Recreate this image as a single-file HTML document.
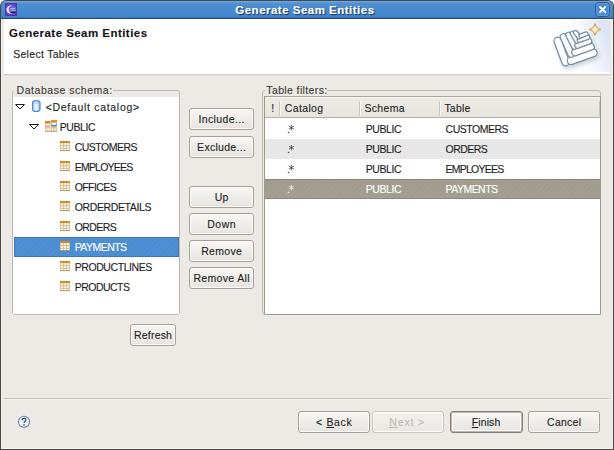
<!DOCTYPE html>
<html><head><meta charset="utf-8"><style>
*{margin:0;padding:0;box-sizing:border-box}
html,body{width:614px;height:450px;overflow:hidden;background:#fff}
body{position:relative;font-family:"Liberation Sans",sans-serif}
.a{position:absolute}
.tx{position:absolute;white-space:nowrap;line-height:20px;-webkit-text-stroke:0.12px currentColor}
.btn{position:absolute;border:1px solid #a8a095;border-radius:3px;background:linear-gradient(#f8f7f5,#efede9 50%,#e8e5df);box-shadow:inset 0 0 0 1px rgba(255,255,255,.8)}
.btn.dis{border-color:#cbc5bc;background:linear-gradient(#f3f1ee,#ebe8e3)}
.btn.def{border:1px solid #877f73;box-shadow:inset 0 0 0 1px #bdb5a9,inset 0 0 0 2px #fbfaf8}
.grp{position:absolute;border:1px solid #c0b9ae;border-radius:3px}
u{text-decoration:underline;text-underline-offset:1px}
</style></head><body>
<div class="a" style="left:0;top:0;width:614px;height:450px;background:#4a4643;border-radius:6px 6px 0 0"></div>
<div class="a" style="left:1px;top:19px;width:612px;height:430px;background:#f7f5f2"></div>
<div class="a" style="left:2px;top:19px;width:610px;height:429px;background:#edeae5"></div>
<div class="a" style="left:1px;top:1px;width:612px;height:18px;border-radius:5px 5px 0 0;background:linear-gradient(#7db4ea 0,#5c9ada 1px,#4e8fd3 3px,#4789ce 60%,#4183ca 100%)"></div>
<div class="a" style="left:1px;top:17px;width:612px;height:1px;background:#3f78bd"></div>
<div class="a" style="left:1px;top:18px;width:612px;height:1px;background:#244a7a"></div>
<div class="tx" style="left:235.30px;top:0.20px;font-size:11.5px;letter-spacing:0.490px;color:#fff;font-weight:bold;text-shadow:1px 1px 1px rgba(20,40,80,.9);">Generate Seam Entities</div>
<svg class="a" style="left:5px;top:3px" width="13" height="13" viewBox="0 0 13 13">
<rect x="0" y="0" width="12" height="13" fill="#5a44c4"/>
<rect x="0.5" y="0.5" width="11" height="12" fill="none" stroke="#4d3aa8" stroke-width="1"/>
<circle cx="5.6" cy="6.6" r="4.2" fill="#efe2ef"/>
<circle cx="7.4" cy="6.4" r="3.7" fill="#7466cf"/>
<rect x="5.5" y="5" width="4.5" height="1" fill="#a8d2ee" opacity=".8"/>
<rect x="5.2" y="6.8" width="5" height="1" fill="#a8d2ee" opacity=".8"/>
<rect x="5.5" y="8.6" width="5" height="1.5" fill="#202458"/>
</svg>
<svg class="a" style="left:595px;top:2px" width="15" height="15" viewBox="0 0 15 15">
<rect x="0.5" y="0.5" width="14" height="14" rx="3" fill="#4d8cd3" stroke="#34558e" stroke-width="1"/>
<rect x="1.5" y="1.5" width="12" height="12" rx="2" fill="none" stroke="#5c9ade" stroke-width="1"/>
<path d="M5 5 L10.2 10.2 M10.2 5 L5 10.2" stroke="#fff" stroke-width="1.9" stroke-linecap="round"/>
</svg>
<div class="a" style="left:4px;top:19px;width:606px;height:55px;background:#fff"></div>
<div class="a" style="left:4px;top:74px;width:606px;height:1px;background:#d3ccc2"></div>
<div class="a" style="left:4px;top:75px;width:606px;height:1px;background:#e5e1db"></div>
<div class="tx" style="left:9.00px;top:23.20px;font-size:11.5px;letter-spacing:0.455px;color:#141414;font-weight:bold;">Generate Seam Entities</div>
<div class="tx" style="left:13.20px;top:43.53px;font-size:10.5px;letter-spacing:0.295px;color:#1e1e1e;">Select Tables</div>
<svg class="a" style="left:540px;top:19px" width="70" height="54" viewBox="540 19 70 54">
<defs><filter id="sh" x="-30%" y="-30%" width="160%" height="160%"><feGaussianBlur stdDeviation="2.2"/></filter>
<linearGradient id="bg" gradientUnits="userSpaceOnUse" x1="566" y1="50" x2="606" y2="36"><stop offset="0" stop-color="#fff" stop-opacity="0"/><stop offset="1" stop-color="#dde4f5"/></linearGradient></defs>
<rect x="540" y="20" width="70" height="52" fill="url(#bg)"/>
<g stroke="#8ea3b6" stroke-linecap="round" opacity=".45" filter="url(#sh)"><line x1="559.3" y1="43.5" x2="567.0" y2="64.5" stroke-width="9.3"/><line x1="572.5" y1="63.3" x2="594.8" y2="55.3" stroke-width="9.3"/><line x1="565.0" y1="39.5" x2="572.5" y2="56.5" stroke-width="8.3"/><line x1="576.5" y1="55.0" x2="592.5" y2="49.3" stroke-width="8.3"/><line x1="570.0" y1="37.5" x2="576.0" y2="49.0" stroke-width="7.3"/><line x1="579.0" y1="48.0" x2="590.5" y2="43.8" stroke-width="7.3"/><line x1="574.0" y1="36.0" x2="578.5" y2="43.5" stroke-width="6.3"/><line x1="581.0" y1="42.5" x2="589.0" y2="39.8" stroke-width="6.3"/><line x1="577.0" y1="35.0" x2="580.5" y2="39.5" stroke-width="5.8"/><line x1="582.5" y1="38.3" x2="587.5" y2="36.5" stroke-width="5.8"/></g>
<g stroke-linecap="round"><line x1="557.8" y1="41" x2="565.5" y2="62" stroke="#7890a2" stroke-width="8.8"/><line x1="557.8" y1="41" x2="565.5" y2="62" stroke="#fdfdfe" stroke-width="6.3"/><line x1="571" y1="60.8" x2="593.3" y2="52.8" stroke="#7890a2" stroke-width="8.8"/><line x1="571" y1="60.8" x2="593.3" y2="52.8" stroke="#fdfdfe" stroke-width="6.3"/><line x1="563.5" y1="37" x2="571" y2="54" stroke="#7890a2" stroke-width="7.8"/><line x1="563.5" y1="37" x2="571" y2="54" stroke="#fdfdfe" stroke-width="5.3"/><line x1="575" y1="52.5" x2="591" y2="46.8" stroke="#7890a2" stroke-width="7.8"/><line x1="575" y1="52.5" x2="591" y2="46.8" stroke="#fdfdfe" stroke-width="5.3"/><line x1="568.5" y1="35" x2="574.5" y2="46.5" stroke="#7890a2" stroke-width="6.8"/><line x1="568.5" y1="35" x2="574.5" y2="46.5" stroke="#fdfdfe" stroke-width="4.3"/><line x1="577.5" y1="45.5" x2="589" y2="41.3" stroke="#7890a2" stroke-width="6.8"/><line x1="577.5" y1="45.5" x2="589" y2="41.3" stroke="#fdfdfe" stroke-width="4.3"/><line x1="572.5" y1="33.5" x2="577" y2="41" stroke="#7890a2" stroke-width="5.8"/><line x1="572.5" y1="33.5" x2="577" y2="41" stroke="#fdfdfe" stroke-width="3.3"/><line x1="579.5" y1="40" x2="587.5" y2="37.3" stroke="#7890a2" stroke-width="5.8"/><line x1="579.5" y1="40" x2="587.5" y2="37.3" stroke="#fdfdfe" stroke-width="3.3"/><line x1="575.5" y1="32.5" x2="579" y2="37" stroke="#7890a2" stroke-width="5.3"/><line x1="575.5" y1="32.5" x2="579" y2="37" stroke="#fdfdfe" stroke-width="2.8"/><line x1="581" y1="35.8" x2="586" y2="34" stroke="#7890a2" stroke-width="5.3"/><line x1="581" y1="35.8" x2="586" y2="34" stroke="#fdfdfe" stroke-width="2.8"/></g>
<path d="M595 23.5 Q596 28.5 601 29.5 Q596 30.5 595 35.5 Q594 30.5 589 29.5 Q594 28.5 595 23.5Z" fill="#f7ebcc" stroke="#d7a54c" stroke-width="1.1"/>
</svg>
<div class="grp" style="left:12px;top:90px;width:168px;height:225px"></div>
<div class="a" style="left:13px;top:97px;width:166px;height:217px;background:#fff"></div>
<div class="a" style="left:14px;top:84px;width:99px;height:10px;background:#edeae5"></div>
<div class="tx" style="left:16.60px;top:79.53px;font-size:10.5px;letter-spacing:0.529px;color:#3a3a3a;">Database schema:</div>
<div class="grp" style="left:262px;top:90px;width:339px;height:225px"></div>
<div class="a" style="left:264px;top:96px;width:337px;height:219px;background:#fff;border:1px solid #9e978c;border-top-color:#a9a296;border-radius:0 0 2px 2px"></div>
<div class="a" style="left:265px;top:84px;width:62px;height:10px;background:#edeae5"></div>
<div class="tx" style="left:266.30px;top:79.53px;font-size:10.5px;letter-spacing:0.379px;color:#3a3a3a;">Table filters:</div>
<div class="a" style="left:14px;top:237px;width:165px;height:20px;background:repeating-linear-gradient(135deg,#4e90d4 0,#4e90d4 2px,#4b8cd2 2px,#4b8cd2 4px);border:1px solid #3d76c0"></div>
<svg class="a" style="left:15px;top:104px" width="10" height="6" viewBox="0 0 10 6"><path d="M0.5 0.5 L9.5 0.5 L5 5 Z" fill="#fff" stroke="#1c1c1c" stroke-width="1" stroke-linejoin="miter"/></svg>
<svg class="a" style="left:29px;top:124px" width="10" height="6" viewBox="0 0 10 6"><path d="M0.5 0.5 L9.5 0.5 L5 5 Z" fill="#fff" stroke="#1c1c1c" stroke-width="1" stroke-linejoin="miter"/></svg>
<svg class="a" style="left:32px;top:100px" width="9" height="12" viewBox="0 0 9 12">
<defs><linearGradient id="cyl" x1="0" x2="1"><stop offset="0" stop-color="#b5d0ef"/><stop offset=".5" stop-color="#f2f7fd"/><stop offset="1" stop-color="#a6c4ea"/></linearGradient></defs>
<rect x="0.6" y="0.6" width="7.4" height="10.8" rx="3.5" ry="2.2" fill="url(#cyl)" stroke="#4a88d4" stroke-width="1.2"/>
<path d="M1.5 2.6 Q4.3 4.2 7.1 2.6" fill="none" stroke="#9dbfe8" stroke-width=".8"/>
</svg>
<svg class="a" style="left:44px;top:119px" width="14" height="14" viewBox="0 0 14 14">
<rect x="1" y="2" width="5.5" height="10.5" fill="#d9c08e"/>
<rect x="7" y="1" width="6" height="11.5" fill="#d9c08e"/>
<rect x="1" y="2" width="5.5" height="2" fill="#dc8a1c"/>
<rect x="7" y="1" width="6" height="2" fill="#dc8a1c"/>
<rect x="8" y="0.8" width="1" height="1" fill="#f0b35a"/><rect x="11" y="0.8" width="1" height="1" fill="#f0b35a"/>
<rect x="2" y="5" width="1.5" height="1.5" fill="#fff"/><rect x="4" y="5" width="1.5" height="1.5" fill="#fff"/>
<rect x="2.3" y="6.8" width="3" height="2" fill="#f6e4e0"/>
<path d="M2 7 Q3.7 9.2 5.5 7" fill="none" stroke="#e06a6a" stroke-width=".9"/>
<rect x="8" y="4" width="4" height="1.8" fill="#fff"/>
<path d="M7.3 5.6 Q10 8.2 12.7 5.6" fill="none" stroke="#3f86e0" stroke-width="1.3"/>
<rect x="1.8" y="9.5" width="1.6" height="2" fill="#fff"/><rect x="4.2" y="9.5" width="1.6" height="2" fill="#fff"/>
<rect x="7.8" y="9.5" width="1.6" height="2" fill="#fff"/><rect x="10.6" y="9.5" width="1.6" height="2" fill="#fff"/>
<rect x="1" y="12" width="12" height="0.8" fill="#b9a27a"/>
</svg>
<div class="tx" style="left:45.70px;top:96.53px;font-size:10.5px;letter-spacing:0.693px;color:#1e1e1e;">&lt;Default catalog&gt;</div>
<div class="tx" style="left:59.80px;top:116.53px;font-size:10.5px;letter-spacing:-0.441px;color:#1e1e1e;">PUBLIC</div>
<svg class="a" style="left:60px;top:141px" width="10" height="10" viewBox="0 0 10 10"><rect x="0" y="0" width="10" height="10" fill="#dcc391"/><rect x="1" y="2" width="2" height="2" fill="#e3f2f8"/><rect x="4" y="2" width="2" height="2" fill="#e3f2f8"/><rect x="7" y="2" width="2" height="2" fill="#e3f2f8"/><rect x="1" y="5" width="2" height="2" fill="#f6f0dc"/><rect x="4" y="5" width="2" height="2" fill="#f6f0dc"/><rect x="7" y="5" width="2" height="2" fill="#f6f0dc"/><rect x="1" y="8" width="2" height="1" fill="#ffffff"/><rect x="4" y="8" width="2" height="1" fill="#ffffff"/><rect x="7" y="8" width="2" height="1" fill="#ffffff"/><rect x="0" y="0" width="10" height="2" fill="#db8919"/><rect x="0" y="9" width="10" height="1" fill="#b09870"/></svg>
<div class="tx" style="left:74.70px;top:136.53px;font-size:10.5px;letter-spacing:-0.498px;color:#1e1e1e;">CUSTOMERS</div>
<svg class="a" style="left:60px;top:161px" width="10" height="10" viewBox="0 0 10 10"><rect x="0" y="0" width="10" height="10" fill="#dcc391"/><rect x="1" y="2" width="2" height="2" fill="#e3f2f8"/><rect x="4" y="2" width="2" height="2" fill="#e3f2f8"/><rect x="7" y="2" width="2" height="2" fill="#e3f2f8"/><rect x="1" y="5" width="2" height="2" fill="#f6f0dc"/><rect x="4" y="5" width="2" height="2" fill="#f6f0dc"/><rect x="7" y="5" width="2" height="2" fill="#f6f0dc"/><rect x="1" y="8" width="2" height="1" fill="#ffffff"/><rect x="4" y="8" width="2" height="1" fill="#ffffff"/><rect x="7" y="8" width="2" height="1" fill="#ffffff"/><rect x="0" y="0" width="10" height="2" fill="#db8919"/><rect x="0" y="9" width="10" height="1" fill="#b09870"/></svg>
<div class="tx" style="left:74.70px;top:156.53px;font-size:10.5px;letter-spacing:-0.773px;color:#1e1e1e;">EMPLOYEES</div>
<svg class="a" style="left:60px;top:181px" width="10" height="10" viewBox="0 0 10 10"><rect x="0" y="0" width="10" height="10" fill="#dcc391"/><rect x="1" y="2" width="2" height="2" fill="#e3f2f8"/><rect x="4" y="2" width="2" height="2" fill="#e3f2f8"/><rect x="7" y="2" width="2" height="2" fill="#e3f2f8"/><rect x="1" y="5" width="2" height="2" fill="#f6f0dc"/><rect x="4" y="5" width="2" height="2" fill="#f6f0dc"/><rect x="7" y="5" width="2" height="2" fill="#f6f0dc"/><rect x="1" y="8" width="2" height="1" fill="#ffffff"/><rect x="4" y="8" width="2" height="1" fill="#ffffff"/><rect x="7" y="8" width="2" height="1" fill="#ffffff"/><rect x="0" y="0" width="10" height="2" fill="#db8919"/><rect x="0" y="9" width="10" height="1" fill="#b09870"/></svg>
<div class="tx" style="left:74.70px;top:176.53px;font-size:10.5px;letter-spacing:-0.578px;color:#1e1e1e;">OFFICES</div>
<svg class="a" style="left:60px;top:201px" width="10" height="10" viewBox="0 0 10 10"><rect x="0" y="0" width="10" height="10" fill="#dcc391"/><rect x="1" y="2" width="2" height="2" fill="#e3f2f8"/><rect x="4" y="2" width="2" height="2" fill="#e3f2f8"/><rect x="7" y="2" width="2" height="2" fill="#e3f2f8"/><rect x="1" y="5" width="2" height="2" fill="#f6f0dc"/><rect x="4" y="5" width="2" height="2" fill="#f6f0dc"/><rect x="7" y="5" width="2" height="2" fill="#f6f0dc"/><rect x="1" y="8" width="2" height="1" fill="#ffffff"/><rect x="4" y="8" width="2" height="1" fill="#ffffff"/><rect x="7" y="8" width="2" height="1" fill="#ffffff"/><rect x="0" y="0" width="10" height="2" fill="#db8919"/><rect x="0" y="9" width="10" height="1" fill="#b09870"/></svg>
<div class="tx" style="left:74.70px;top:196.53px;font-size:10.5px;letter-spacing:-0.378px;color:#1e1e1e;">ORDERDETAILS</div>
<svg class="a" style="left:60px;top:221px" width="10" height="10" viewBox="0 0 10 10"><rect x="0" y="0" width="10" height="10" fill="#dcc391"/><rect x="1" y="2" width="2" height="2" fill="#e3f2f8"/><rect x="4" y="2" width="2" height="2" fill="#e3f2f8"/><rect x="7" y="2" width="2" height="2" fill="#e3f2f8"/><rect x="1" y="5" width="2" height="2" fill="#f6f0dc"/><rect x="4" y="5" width="2" height="2" fill="#f6f0dc"/><rect x="7" y="5" width="2" height="2" fill="#f6f0dc"/><rect x="1" y="8" width="2" height="1" fill="#ffffff"/><rect x="4" y="8" width="2" height="1" fill="#ffffff"/><rect x="7" y="8" width="2" height="1" fill="#ffffff"/><rect x="0" y="0" width="10" height="2" fill="#db8919"/><rect x="0" y="9" width="10" height="1" fill="#b09870"/></svg>
<div class="tx" style="left:74.70px;top:216.53px;font-size:10.5px;letter-spacing:-0.568px;color:#1e1e1e;">ORDERS</div>
<svg class="a" style="left:60px;top:241px" width="10" height="10" viewBox="0 0 10 10"><rect x="0" y="0" width="10" height="10" fill="#dcc391"/><rect x="1" y="2" width="2" height="2" fill="#e3f2f8"/><rect x="4" y="2" width="2" height="2" fill="#e3f2f8"/><rect x="7" y="2" width="2" height="2" fill="#e3f2f8"/><rect x="1" y="5" width="2" height="2" fill="#f6f0dc"/><rect x="4" y="5" width="2" height="2" fill="#f6f0dc"/><rect x="7" y="5" width="2" height="2" fill="#f6f0dc"/><rect x="1" y="8" width="2" height="1" fill="#ffffff"/><rect x="4" y="8" width="2" height="1" fill="#ffffff"/><rect x="7" y="8" width="2" height="1" fill="#ffffff"/><rect x="0" y="0" width="10" height="2" fill="#db8919"/><rect x="0" y="9" width="10" height="1" fill="#b09870"/></svg>
<div class="tx" style="left:74.70px;top:236.53px;font-size:10.5px;letter-spacing:-0.539px;color:#ffffff;">PAYMENTS</div>
<svg class="a" style="left:60px;top:261px" width="10" height="10" viewBox="0 0 10 10"><rect x="0" y="0" width="10" height="10" fill="#dcc391"/><rect x="1" y="2" width="2" height="2" fill="#e3f2f8"/><rect x="4" y="2" width="2" height="2" fill="#e3f2f8"/><rect x="7" y="2" width="2" height="2" fill="#e3f2f8"/><rect x="1" y="5" width="2" height="2" fill="#f6f0dc"/><rect x="4" y="5" width="2" height="2" fill="#f6f0dc"/><rect x="7" y="5" width="2" height="2" fill="#f6f0dc"/><rect x="1" y="8" width="2" height="1" fill="#ffffff"/><rect x="4" y="8" width="2" height="1" fill="#ffffff"/><rect x="7" y="8" width="2" height="1" fill="#ffffff"/><rect x="0" y="0" width="10" height="2" fill="#db8919"/><rect x="0" y="9" width="10" height="1" fill="#b09870"/></svg>
<div class="tx" style="left:74.70px;top:256.53px;font-size:10.5px;letter-spacing:-0.420px;color:#1e1e1e;">PRODUCTLINES</div>
<svg class="a" style="left:60px;top:281px" width="10" height="10" viewBox="0 0 10 10"><rect x="0" y="0" width="10" height="10" fill="#dcc391"/><rect x="1" y="2" width="2" height="2" fill="#e3f2f8"/><rect x="4" y="2" width="2" height="2" fill="#e3f2f8"/><rect x="7" y="2" width="2" height="2" fill="#e3f2f8"/><rect x="1" y="5" width="2" height="2" fill="#f6f0dc"/><rect x="4" y="5" width="2" height="2" fill="#f6f0dc"/><rect x="7" y="5" width="2" height="2" fill="#f6f0dc"/><rect x="1" y="8" width="2" height="1" fill="#ffffff"/><rect x="4" y="8" width="2" height="1" fill="#ffffff"/><rect x="7" y="8" width="2" height="1" fill="#ffffff"/><rect x="0" y="0" width="10" height="2" fill="#db8919"/><rect x="0" y="9" width="10" height="1" fill="#b09870"/></svg>
<div class="tx" style="left:74.70px;top:276.53px;font-size:10.5px;letter-spacing:-0.515px;color:#1e1e1e;">PRODUCTS</div>
<div class="a" style="left:265px;top:97px;width:335px;height:21px;background:linear-gradient(#eeebe6,#e8e4de);border-bottom:1px solid #b5aea3"></div>
<div class="a" style="left:265px;top:97px;width:335px;height:1px;background:#f8f7f5"></div>
<div class="a" style="left:279px;top:101px;width:1px;height:15px;background:#cdc6bb"></div>
<div class="a" style="left:280px;top:101px;width:1px;height:15px;background:#f8f7f5"></div>
<div class="a" style="left:359px;top:101px;width:1px;height:15px;background:#cdc6bb"></div>
<div class="a" style="left:360px;top:101px;width:1px;height:15px;background:#f8f7f5"></div>
<div class="a" style="left:439px;top:101px;width:1px;height:15px;background:#cdc6bb"></div>
<div class="a" style="left:440px;top:101px;width:1px;height:15px;background:#f8f7f5"></div>
<div class="a" style="left:599px;top:101px;width:1px;height:15px;background:#cdc6bb"></div>
<div class="tx" style="left:271.20px;top:97.53px;font-size:10.5px;letter-spacing:1.060px;color:#1e1e1e;">!</div>
<div class="tx" style="left:284.80px;top:97.53px;font-size:10.5px;letter-spacing:0.362px;color:#1e1e1e;">Catalog</div>
<div class="tx" style="left:364.40px;top:97.53px;font-size:10.5px;letter-spacing:0.333px;color:#1e1e1e;">Schema</div>
<div class="tx" style="left:444.40px;top:97.53px;font-size:10.5px;letter-spacing:0.226px;color:#1e1e1e;">Table</div>
<div class="a" style="left:265px;top:119px;width:335px;height:20px;background:#ffffff"></div>
<div class="tx" style="left:287.00px;top:118.53px;font-size:10.5px;letter-spacing:0.260px;color:#1e1e1e;">.</div>
<svg class="a" style="left:287px;top:124px" width="9" height="8" viewBox="287 124 9 8"><path d="M291.4 125.0 V130.4 M289 126.3 L293.8 129.1 M289 129.1 L293.8 126.3" stroke="#1e1e1e" stroke-width="0.8" opacity=".85"/></svg>
<div class="tx" style="left:365.80px;top:118.53px;font-size:10.5px;letter-spacing:-0.441px;color:#1e1e1e;">PUBLIC</div>
<div class="tx" style="left:445.60px;top:118.53px;font-size:10.5px;letter-spacing:-0.498px;color:#1e1e1e;">CUSTOMERS</div>
<div class="a" style="left:265px;top:139px;width:335px;height:20px;background:#e8e8e8"></div>
<div class="tx" style="left:287.00px;top:138.53px;font-size:10.5px;letter-spacing:0.260px;color:#1e1e1e;">.</div>
<svg class="a" style="left:287px;top:144px" width="9" height="8" viewBox="287 144 9 8"><path d="M291.4 145.0 V150.39999999999998 M289 146.29999999999998 L293.8 149.1 M289 149.1 L293.8 146.29999999999998" stroke="#1e1e1e" stroke-width="0.8" opacity=".85"/></svg>
<div class="tx" style="left:365.80px;top:138.53px;font-size:10.5px;letter-spacing:-0.441px;color:#1e1e1e;">PUBLIC</div>
<div class="tx" style="left:445.60px;top:138.53px;font-size:10.5px;letter-spacing:-0.568px;color:#1e1e1e;">ORDERS</div>
<div class="a" style="left:265px;top:159px;width:335px;height:20px;background:#ffffff"></div>
<div class="tx" style="left:287.00px;top:158.53px;font-size:10.5px;letter-spacing:0.260px;color:#1e1e1e;">.</div>
<svg class="a" style="left:287px;top:164px" width="9" height="8" viewBox="287 164 9 8"><path d="M291.4 165.0 V170.39999999999998 M289 166.29999999999998 L293.8 169.1 M289 169.1 L293.8 166.29999999999998" stroke="#1e1e1e" stroke-width="0.8" opacity=".85"/></svg>
<div class="tx" style="left:365.80px;top:158.53px;font-size:10.5px;letter-spacing:-0.441px;color:#1e1e1e;">PUBLIC</div>
<div class="tx" style="left:445.60px;top:158.53px;font-size:10.5px;letter-spacing:-0.773px;color:#1e1e1e;">EMPLOYEES</div>
<div class="a" style="left:265px;top:179px;width:335px;height:20px;background:repeating-linear-gradient(135deg,#a49f90 0,#a49f90 2px,#a19c8d 2px,#a19c8d 4px);border-top:1px solid #8e887c;border-bottom:1px solid #8e887c"></div>
<div class="tx" style="left:287.00px;top:178.53px;font-size:10.5px;letter-spacing:0.260px;color:#ffffff;">.</div>
<svg class="a" style="left:287px;top:184px" width="9" height="8" viewBox="287 184 9 8"><path d="M291.4 185.0 V190.39999999999998 M289 186.29999999999998 L293.8 189.1 M289 189.1 L293.8 186.29999999999998" stroke="#ffffff" stroke-width="0.8" opacity=".85"/></svg>
<div class="tx" style="left:365.80px;top:178.53px;font-size:10.5px;letter-spacing:-0.441px;color:#ffffff;">PUBLIC</div>
<div class="tx" style="left:445.60px;top:178.53px;font-size:10.5px;letter-spacing:-0.539px;color:#ffffff;">PAYMENTS</div>
<div class="btn " style="left:189px;top:108px;width:65px;height:22px"></div><div class="tx" style="left:198.50px;top:108.53px;font-size:10.5px;letter-spacing:0.363px;color:#1e1e1e;">Include...</div>
<div class="btn " style="left:189px;top:136px;width:65px;height:22px"></div><div class="tx" style="left:197.10px;top:136.53px;font-size:10.5px;letter-spacing:0.289px;color:#1e1e1e;">Exclude...</div>
<div class="btn " style="left:189px;top:186px;width:65px;height:22px"></div><div class="tx" style="left:214.70px;top:186.53px;font-size:10.5px;letter-spacing:0.260px;color:#1e1e1e;">Up</div>
<div class="btn " style="left:189px;top:213px;width:65px;height:22px"></div><div class="tx" style="left:207.30px;top:213.53px;font-size:10.5px;letter-spacing:0.473px;color:#1e1e1e;">Down</div>
<div class="btn " style="left:189px;top:240px;width:65px;height:22px"></div><div class="tx" style="left:201.20px;top:240.53px;font-size:10.5px;letter-spacing:0.308px;color:#1e1e1e;">Remove</div>
<div class="btn " style="left:189px;top:267px;width:65px;height:22px"></div><div class="tx" style="left:193.40px;top:267.53px;font-size:10.5px;letter-spacing:0.341px;color:#1e1e1e;">Remove All</div>
<div class="btn " style="left:130px;top:324px;width:46px;height:22px"></div><div class="tx" style="left:134.10px;top:324.53px;font-size:10.5px;letter-spacing:0.175px;color:#1e1e1e;">Refresh</div>
<div class="a" style="left:4px;top:398px;width:606px;height:1px;background:#c6bfb4"></div>
<div class="a" style="left:4px;top:399px;width:606px;height:1px;background:#f6f4f1"></div>
<svg class="a" style="left:17px;top:415px" width="14" height="14" viewBox="0 0 14 14">
<circle cx="7" cy="6.8" r="5.6" fill="#f2f5f9" stroke="#7089a6" stroke-width="1.1"/>
<path d="M5.1 5.2 Q5.1 3.3 7 3.3 Q8.9 3.3 8.9 5 Q8.9 6.1 7.5 6.8 Q7 7.1 7 8.1" fill="none" stroke="#2f4a7e" stroke-width="1.25"/>
<rect x="6.35" y="9.1" width="1.4" height="1.4" fill="#2f4a7e"/>
</svg>
<div class="btn " style="left:298px;top:411px;width:72px;height:22px"></div><div class="tx" style="left:316.10px;top:411.53px;font-size:10.5px;letter-spacing:0.650px;color:#1e1e1e;">&lt; <u>B</u>ack</div>
<div class="btn dis" style="left:372px;top:411px;width:72px;height:22px"></div><div class="tx" style="left:389.30px;top:411.53px;font-size:10.5px;letter-spacing:0.848px;color:#c0bbb2;"><u>N</u>ext &gt;</div>
<div class="btn def" style="left:450px;top:411px;width:73px;height:22px"></div><div class="tx" style="left:471.80px;top:411.53px;font-size:10.5px;letter-spacing:0.093px;color:#1e1e1e;"><u>F</u>inish</div>
<div class="btn " style="left:528px;top:411px;width:72px;height:22px"></div><div class="tx" style="left:547.10px;top:411.53px;font-size:10.5px;letter-spacing:0.249px;color:#1e1e1e;">Cancel</div>
</body></html>
